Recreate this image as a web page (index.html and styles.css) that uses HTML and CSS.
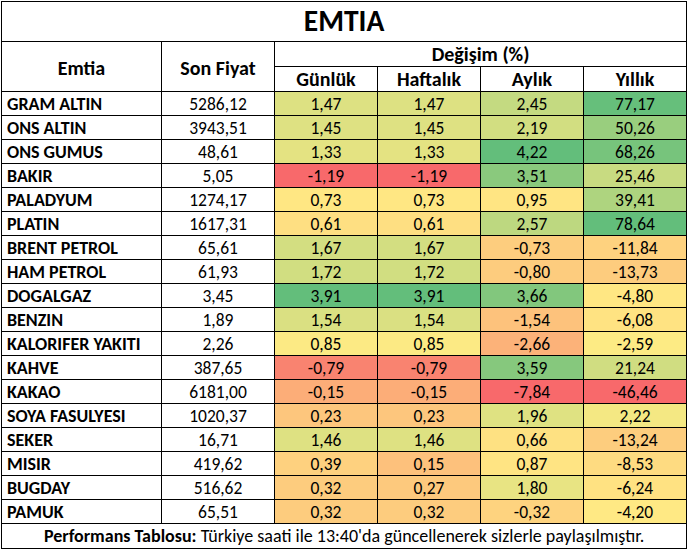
FILE: index.html
```html
<!DOCTYPE html>
<html lang="tr">
<head>
<meta charset="utf-8">
<title>EMTIA</title>
<link rel="stylesheet" href="styles.css">
</head>
<body>
<table class="board">
  <colgroup>
    <col class="c-name"><col class="c-price"><col class="c-pct"><col class="c-pct"><col class="c-pct"><col class="c-pct">
  </colgroup>
  <thead>
    <tr class="r-title"><th colspan="6" class="title">EMTIA</th></tr>
    <tr class="r-head1">
      <th rowspan="2" class="head span">Emtia</th>
      <th rowspan="2" class="head span">Son Fiyat</th>
      <th colspan="4" class="head">Değişim (%)</th>
    </tr>
    <tr class="r-head2">
      <th class="head">Günlük</th>
      <th class="head">Haftalık</th>
      <th class="head">Aylık</th>
      <th class="head">Yıllık</th>
    </tr>
  </thead>
  <tbody id="rows"></tbody>
  <tfoot>
    <tr class="r-foot"><td colspan="6" class="foot"><b>Performans Tablosu:</b> Türkiye saati ile 13:40'da güncellenerek sizlerle paylaşılmıştır.</td></tr>
  </tfoot>
</table>
<script src="script.js"></script>
</body>
</html>
```
FILE: styles.css
```css
html, body {
  margin: 0;
  padding: 0;
  background: #ffffff;
}
body {
  font-family: Carlito, "Liberation Sans Narrow", "DejaVu Sans Condensed", "Liberation Sans", sans-serif;
  color: #000;
}
.board {
  border-collapse: collapse;
  margin: 1px 0 0 1px;
  table-layout: fixed;
  width: 686px;
}
.board td, .board th {
  border: 1px solid #000;
  padding: 0;
  line-height: 1;
}
.c-name { width: 160px; }
.c-price { width: 113px; }
.c-pct { width: 103px; }
.r-title { height: 40px; }
.board .title {
  font-size: 29.5px;
  font-weight: bold;
  text-align: center;
  vertical-align: middle;
  padding-top: 1px;
}
.r-head1 { height: 25px; }
.r-head2 { height: 25px; }
.board .head {
  font-size: 20px;
  font-weight: bold;
  text-align: center;
  vertical-align: bottom;
  padding-bottom: 2px;
}
.board .span {
  vertical-align: middle;
  padding-bottom: 0;
  padding-top: 3px;
}
.row { height: 24px; }
.board .name {
  font-size: 18px;
  font-weight: bold;
  text-align: left;
  padding-left: 5px;
  padding-bottom: 2px;
  vertical-align: bottom;
  white-space: nowrap;
}
.board .num {
  font-size: 17.5px;
  text-align: center;
  vertical-align: bottom;
  padding-bottom: 2px;
}
.r-foot { height: 25px; }
.board .foot {
  font-size: 18px;
  text-align: center;
  vertical-align: bottom;
  padding-bottom: 3px;
}
```
FILE: script.js
```js
const data = [
  ["GRAM ALTIN", "5286,12", 1.47, 1.47, 2.45, 77.17],
  ["ONS ALTIN", "3943,51", 1.45, 1.45, 2.19, 50.26],
  ["ONS GUMUS", "48,61", 1.33, 1.33, 4.22, 68.26],
  ["BAKIR", "5,05", -1.19, -1.19, 3.51, 25.46],
  ["PALADYUM", "1274,17", 0.73, 0.73, 0.95, 39.41],
  ["PLATIN", "1617,31", 0.61, 0.61, 2.57, 78.64],
  ["BRENT PETROL", "65,61", 1.67, 1.67, -0.73, -11.84],
  ["HAM PETROL", "61,93", 1.72, 1.72, -0.80, -13.73],
  ["DOGALGAZ", "3,45", 3.91, 3.91, 3.66, -4.80],
  ["BENZIN", "1,89", 1.54, 1.54, -1.54, -6.08],
  ["KALORIFER YAKITI", "2,26", 0.85, 0.85, -2.66, -2.59],
  ["KAHVE", "387,65", -0.79, -0.79, 3.59, 21.24],
  ["KAKAO", "6181,00", -0.15, -0.15, -7.84, -46.46],
  ["SOYA FASULYESI", "1020,37", 0.23, 0.23, 1.96, 2.22],
  ["SEKER", "16,71", 1.46, 1.46, 0.66, -13.24],
  ["MISIR", "419,62", 0.39, 0.15, 0.87, -8.53],
  ["BUGDAY", "516,62", 0.32, 0.27, 1.80, -6.24],
  ["PAMUK", "65,51", 0.32, 0.32, -0.32, -4.20]
];
const RED = [248, 105, 107], YEL = [255, 235, 132], GRN = [99, 190, 123];
function mix(a, b, t) {
  return "rgb(" + a.map((v, i) => Math.round(v + (b[i] - v) * t)).join(",") + ")";
}
const scales = [2, 3, 4, 5].map(ci => {
  const vals = data.map(r => r[ci]).slice().sort((a, b) => a - b);
  const n = vals.length;
  const pos = (n - 1) * 0.5, lo = Math.floor(pos), f = pos - lo;
  const mid = vals[lo] + (vals[Math.min(lo + 1, n - 1)] - vals[lo]) * f;
  return { min: vals[0], mid: mid, max: vals[n - 1] };
});
function color(v, s) {
  if (v <= s.mid) return mix(RED, YEL, s.mid === s.min ? 1 : (v - s.min) / (s.mid - s.min));
  return mix(YEL, GRN, (v - s.mid) / (s.max - s.mid));
}
const fmt = v => v.toFixed(2).replace(".", ",");
const tbody = document.getElementById("rows");
data.forEach(r => {
  const tr = document.createElement("tr");
  tr.className = "row";
  const n = document.createElement("td");
  n.className = "name";
  n.textContent = r[0];
  tr.appendChild(n);
  const p = document.createElement("td");
  p.className = "num";
  p.textContent = r[1];
  tr.appendChild(p);
  for (let k = 0; k < 4; k++) {
    const td = document.createElement("td");
    td.className = "num";
    td.textContent = fmt(r[k + 2]);
    td.style.backgroundColor = color(r[k + 2], scales[k]);
    tr.appendChild(td);
  }
  tbody.appendChild(tr);
});
```
